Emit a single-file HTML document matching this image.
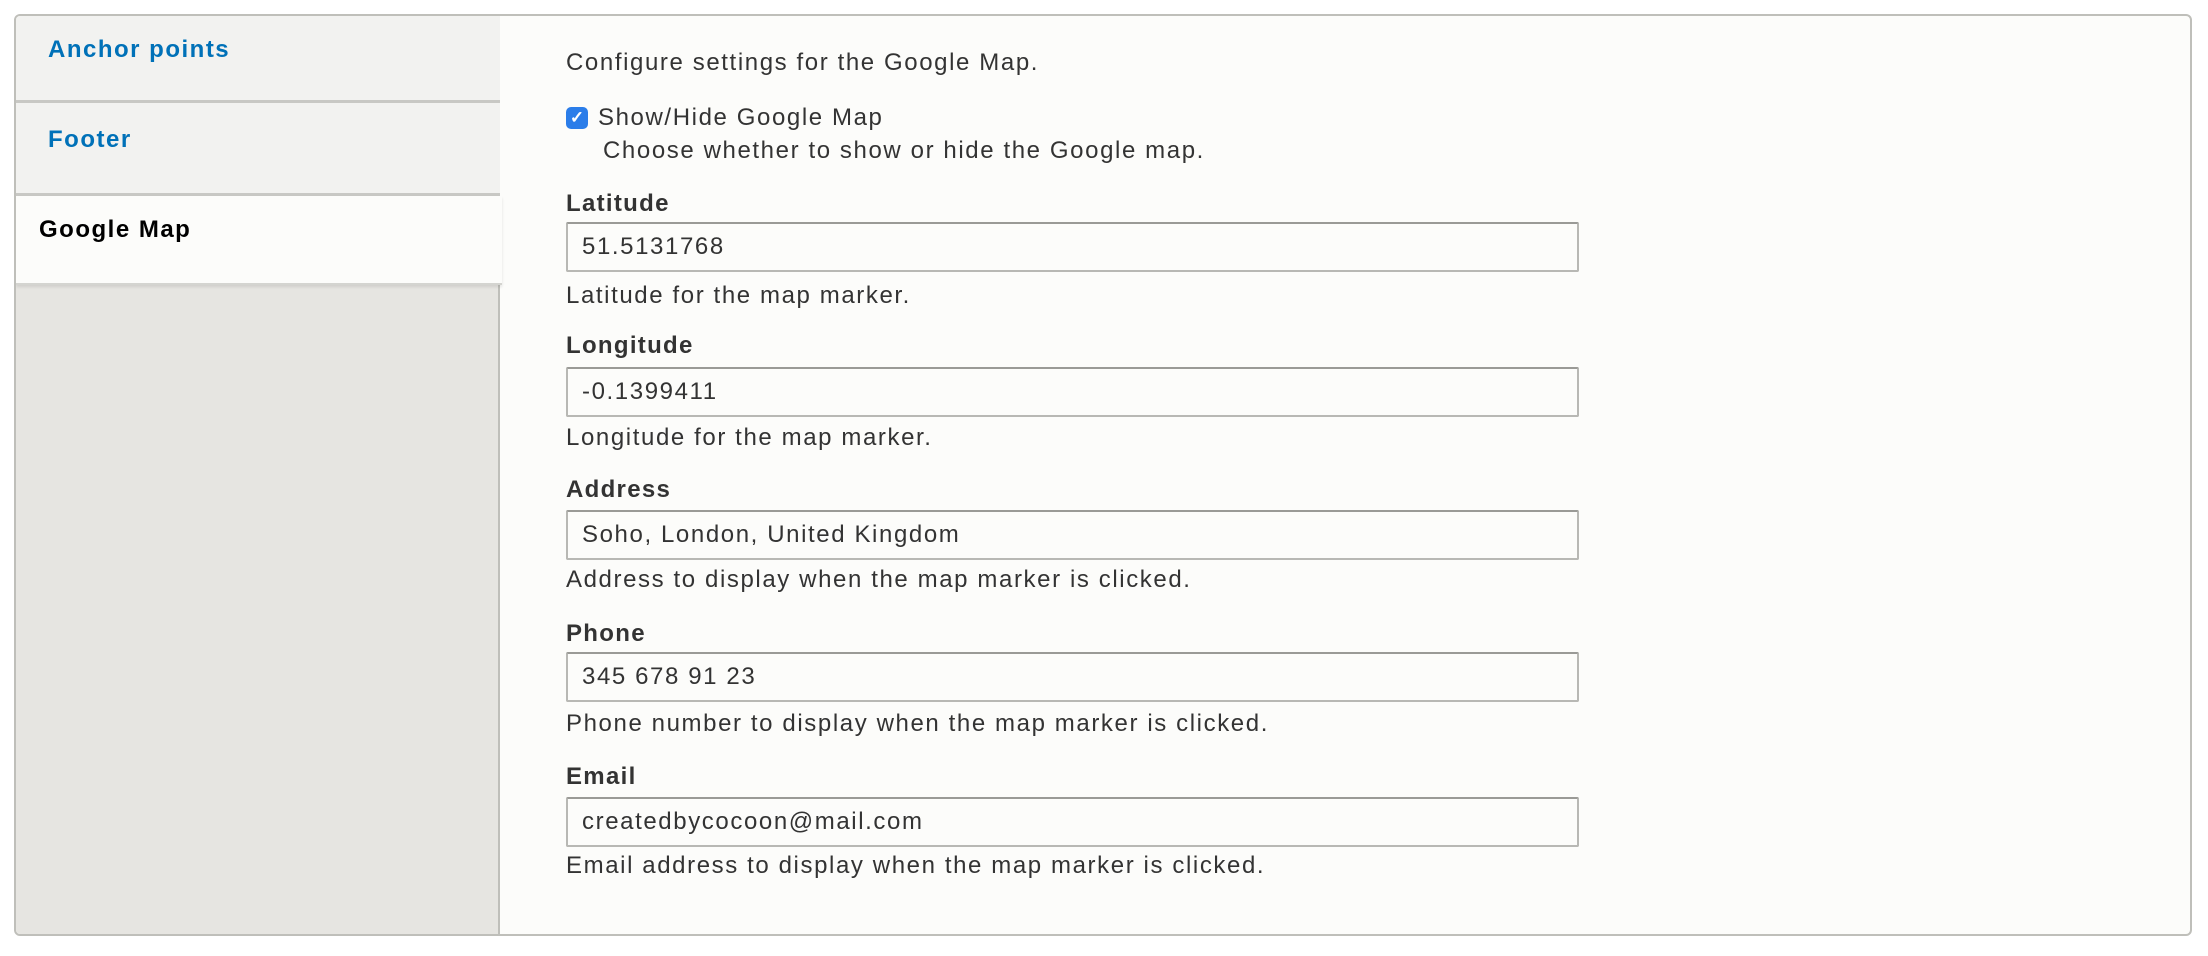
<!DOCTYPE html>
<html><head><meta charset="utf-8"><style>
*{box-sizing:border-box;margin:0;padding:0}
body{width:2208px;height:956px;background:#fff;font-family:"Liberation Sans",Arial,sans-serif;color:#333;position:relative;overflow:hidden;letter-spacing:1.6px}
.box{position:absolute;left:14px;top:14px;width:2178px;height:922px;border:2px solid #bfbfba;border-radius:6px;background:#fcfcfa;overflow:hidden}
.side{position:absolute;left:0;top:0;width:484px;height:100%;background:#e6e5e1;border-right:2px solid #bfbfba}
.tab{position:absolute;left:0;width:484px;background:#f2f2f0;border-bottom:3px solid #c8c8c4;font-weight:bold;font-size:24px;color:#0071b8;padding-left:32px;letter-spacing:1.5px}
.sel{background:#fcfcfa;color:#000;width:486px;padding-left:23px;border-bottom:2px solid #d4d4d0;box-shadow:0 2px 3px rgba(0,0,0,.1)}
.t{position:absolute;left:566px;font-size:24px;line-height:28px;color:#333;white-space:nowrap}
.l{font-weight:bold;font-size:24px;color:#333;letter-spacing:1.3px}
.in{position:absolute;left:566px;width:1013px;height:50px;border:2px solid #b8b8b4;border-top-color:#9a9a96;border-radius:2px;background:#fcfcfa;font-size:24px;line-height:46px;padding-left:14px;color:#333}
.cb{position:absolute;left:566px;top:107px;width:22px;height:22px;background:#2b7de9;border-radius:5px;color:#fff;font-size:17px;line-height:22px;text-align:center;font-weight:bold;letter-spacing:0}
</style></head><body>
<div class="box">
<div class="side">
<div class="tab" style="top:0;height:87px;padding-top:20px">Anchor points</div>
<div class="tab" style="top:87px;height:93px;padding-top:23px">Footer</div>
<div class="tab sel" style="top:180px;height:89px;padding-top:20px">Google Map</div>
</div>
</div>
<div class="t" style="top:49px">Configure settings for the Google Map.</div>
<div class="cb">✓</div>
<div class="t" style="top:104px;left:598px">Show/Hide Google Map</div>
<div class="t" style="top:137px;left:603px">Choose whether to show or hide the Google map.</div>

<div class="t l" style="top:190px">Latitude</div>
<div class="in" style="top:222px">51.5131768</div>
<div class="t" style="top:282px">Latitude for the map marker.</div>

<div class="t l" style="top:332px">Longitude</div>
<div class="in" style="top:367px">-0.1399411</div>
<div class="t" style="top:424px">Longitude for the map marker.</div>

<div class="t l" style="top:476px">Address</div>
<div class="in" style="top:510px">Soho, London, United Kingdom</div>
<div class="t" style="top:566px">Address to display when the map marker is clicked.</div>

<div class="t l" style="top:620px">Phone</div>
<div class="in" style="top:652px">345 678 91 23</div>
<div class="t" style="top:710px">Phone number to display when the map marker is clicked.</div>

<div class="t l" style="top:763px">Email</div>
<div class="in" style="top:797px">createdbycocoon@mail.com</div>
<div class="t" style="top:852px">Email address to display when the map marker is clicked.</div>
</body></html>
